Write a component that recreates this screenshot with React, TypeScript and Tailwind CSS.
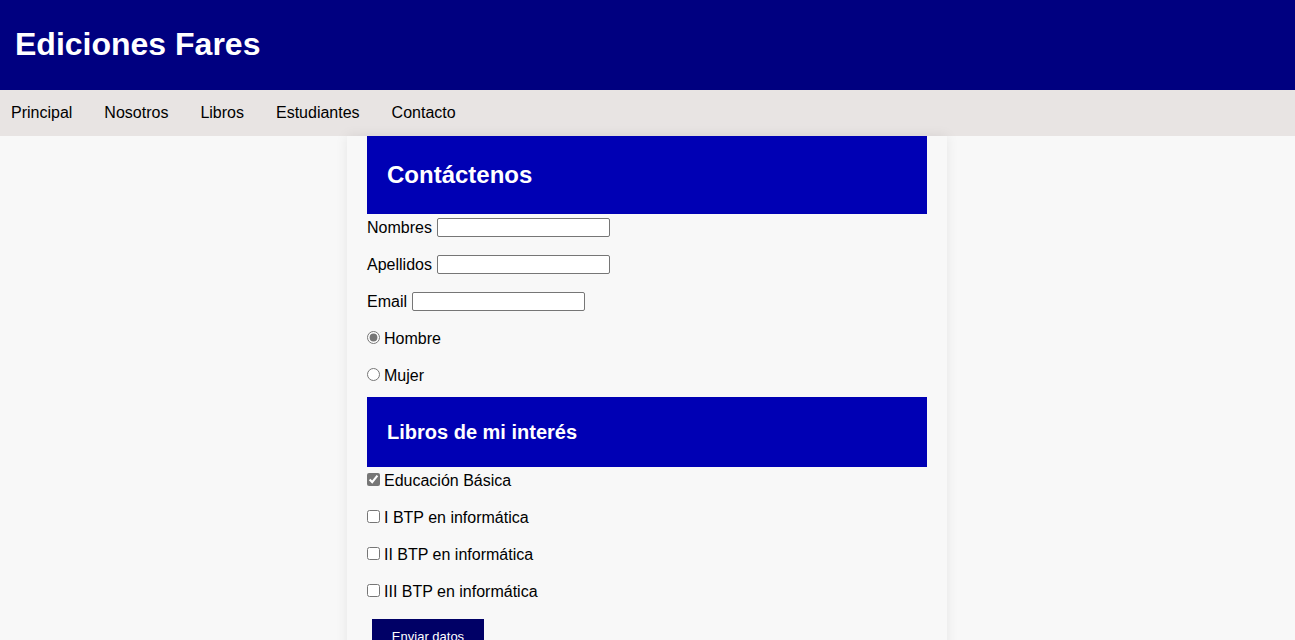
import React from 'react'

const navItems = ['Principal', 'Nosotros', 'Libros', 'Estudiantes', 'Contacto']

function TextRow({ label }: { label: string }) {
  return (
    <div className="flex h-[18px] items-center">
      <span>{label}</span>
      <input
        type="text"
        className="ml-[5px] mt-[-1px] h-[19px] w-[173px] rounded-[2px] border border-[#767676] bg-white"
      />
    </div>
  )
}

function Choice({ type, label, checked }: { type: 'radio' | 'checkbox'; label: string; checked?: boolean }) {
  return (
    <label className="flex h-[18px] items-center">
      <input
        type={type}
        name={type === 'radio' ? 'sexo' : undefined}
        defaultChecked={checked}
        className="m-0 mb-[3px] mr-[4px] h-[13px] w-[13px] accent-[#767676]"
      />
      <span>{label}</span>
    </label>
  )
}

export default function App() {
  return (
    <div className="min-h-screen bg-[#f8f8f8] font-['Liberation_Sans',Arial,sans-serif] text-black">
      {/* Header */}
      <header className="flex h-[90px] items-center bg-[#000080] pb-[2px] pl-[15px]">
        <h1 className="text-[32px] font-bold text-white">Ediciones Fares</h1>
      </header>

      {/* Nav */}
      <nav className="flex h-[46px] items-center gap-8 bg-[#e8e4e3] pl-[11px] text-[16px]">
        {navItems.map((item) => (
          <a key={item} href="#" className="text-black">
            {item}
          </a>
        ))}
      </nav>

      {/* Form card */}
      <div className="flex justify-center pr-[1px]">
        <main className="w-[600px] bg-[#f8f8f8] px-5 pb-6 text-[16px] shadow-[0_0_12px_rgba(0,0,0,0.08)]">
          <div className="flex h-[78px] items-center bg-[#0000b4] px-5">
            <h2 className="text-[24px] font-bold text-white">Contáctenos</h2>
          </div>

          <div className="mt-[5px] flex flex-col gap-[19px]">
            <TextRow label="Nombres" />
            <TextRow label="Apellidos" />
            <TextRow label="Email" />
            <Choice type="radio" label="Hombre" checked />
            <Choice type="radio" label="Mujer" />
          </div>

          <div className="mt-[12px] flex h-[70px] items-center bg-[#0000b4] px-5">
            <h2 className="text-[20px] font-bold text-white">Libros de mi interés</h2>
          </div>

          <div className="mt-[5px] flex flex-col gap-[19px]">
            <Choice type="checkbox" label="Educación Básica" checked />
            <Choice type="checkbox" label="I BTP en informática" />
            <Choice type="checkbox" label="II BTP en informática" />
            <Choice type="checkbox" label="III BTP en informática" />
          </div>

          <button className="ml-[5px] mt-[18px] h-[36px] w-[112px] bg-[#000066] text-[13px] text-white">
            Enviar datos
          </button>
        </main>
      </div>
    </div>
  )
}
